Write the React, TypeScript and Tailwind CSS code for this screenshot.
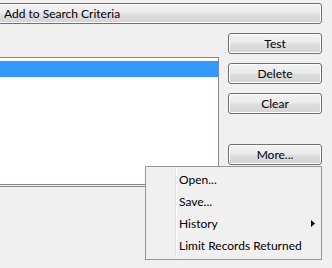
import React from "react";

const font = { fontFamily: 'Lato, "Noto Sans", sans-serif' };

function WinButton({ label, className = "" }: { label: string; className?: string }) {
  return (
    <div
      className={
        "h-[21px] border border-[#707070] rounded-[3px] flex items-center text-[12px] text-black bg-[linear-gradient(#f3f3f3_0%,#ebebeb_45%,#dddddd_55%,#d4d4d4_100%)] shadow-[inset_0_0_0_1px_#fcfcfc] " +
        className
      }
    >
      {label}
    </div>
  );
}

export default function App() {
  return (
    <div className="relative w-[332px] h-[268px] overflow-hidden bg-[#f0f0f0] leading-none" style={font}>
      <div className="pt-[3px] pr-[10px] -ml-[3px]">
        <WinButton label="Add to Search Criteria" className="pl-[6px]" />
      </div>
      <div className="flex items-start mt-[9px]">
        <div className="-ml-[3px] mt-[24px] w-[222px]">
          <div className="h-[128px] border border-[#828790] bg-white pt-[3px]">
            <div className="h-[16px] bg-[#3399ff]" />
          </div>
          <div className="mt-[1px] h-px bg-[#8a8a8a]" />
        </div>
        <div className="ml-[9px] w-[94px] flex flex-col">
          <WinButton label="Test" className="justify-center" />
          <WinButton label="Delete" className="justify-center mt-[9px]" />
          <WinButton label="Clear" className="justify-center mt-[9px]" />
          <WinButton label="More..." className="justify-center mt-[30px]" />
        </div>
      </div>

      <div className="absolute left-[145px] top-[166px] w-[177px] h-[94px] border border-[#979797] bg-[#f0f0f0] py-[2px] text-[12px] text-black">
        <div className="absolute left-[29px] top-[2px] bottom-[2px] w-px bg-[#e2e3e3]" />
        <div className="absolute left-[30px] top-[2px] bottom-[2px] w-px bg-white" />
        {["Open...", "Save...", "History", "Limit Records Returned"].map((t) => (
          <div key={t} className="relative h-[22px] flex items-center pl-[33px]">
            <span>{t}</span>
            {t === "History" && (
              <svg className="absolute right-[6px] top-[7px]" width="4" height="7" viewBox="0 0 4 7">
                <path d="M0 0 L4 3.5 L0 7 Z" fill="#000" />
              </svg>
            )}
          </div>
        ))}
      </div>
    </div>
  );
}
